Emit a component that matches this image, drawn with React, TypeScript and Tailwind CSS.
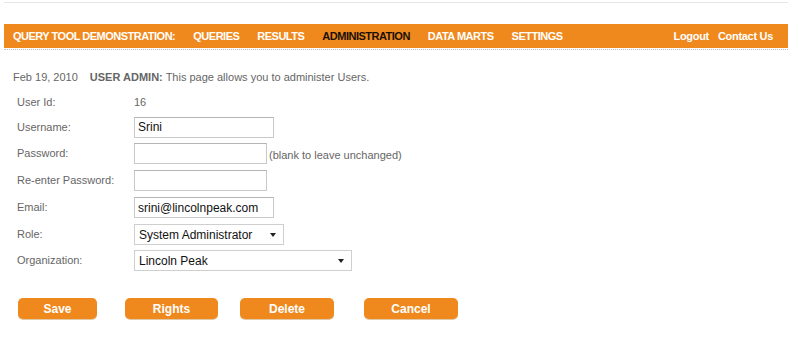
import React from "react";

const navItems = ["QUERIES", "RESULTS", "ADMINISTRATION", "DATA MARTS", "SETTINGS"];

const Field: React.FC<{ value?: string; width: string }> = ({ value, width }) => (
    <div
        className={`${width} h-[21px] border border-[#c9c9c9] border-t-[#b5b5b5] bg-white px-[3px] flex items-center text-[12px] text-[#111]`}
    >
        {value}
    </div>
);

const Select: React.FC<{ value: string; width: string }> = ({ value, width }) => (
    <div
        className={`${width} h-[21px] border border-[#cfcfcf] bg-white pl-[4px] pr-[7px] flex items-center justify-between text-[12px] text-[#111]`}
    >
        <span>{value}</span>
        <span className="w-0 h-0 border-l-[3.5px] border-r-[3.5px] border-t-[4px] border-l-transparent border-r-transparent border-t-[#222]" />
    </div>
);

const Row: React.FC<{ label: string; h: string; children: React.ReactNode }> = ({
    label,
    h,
    children,
}) => (
    <div className={`flex items-center ${h}`}>
        <div className="w-[117px] text-[#666]">{label}</div>
        <div className="flex items-center">{children}</div>
    </div>
);

const Button: React.FC<{ label: string; width: string }> = ({ label, width }) => (
    <button
        className={`${width} h-[21px] rounded-[5px] bg-[#f0891d] text-white font-bold text-[12px] leading-none shadow-[0_1px_0_#e0c9a8]`}
    >
        {label}
    </button>
);

export default function App() {
    return (
        <div className="w-[792px] h-[340px] bg-white font-['Liberation_Sans',Arial,sans-serif] text-[11px] overflow-hidden">
            <div className="mx-[4px] mt-[2px] h-px bg-[#e6e6e6]" />
            <div className="ml-[4px] mr-[4px] mt-[21px] h-[24px] bg-[#f0891d] flex items-center pl-[9px] pr-[15px] text-white font-bold text-[11px]">
                <div className="flex tracking-[-0.5px]">
                    <span className="mr-[18px]">QUERY TOOL DEMONSTRATION:</span>
                    <div className="flex gap-[18px]">
                        {navItems.map((item) => (
                            <span
                                key={item}
                                className={item === "ADMINISTRATION" ? "text-[#1a1008]" : ""}
                            >
                                {item}
                            </span>
                        ))}
                    </div>
                </div>
                <div className="ml-auto flex gap-[9px] tracking-[-0.3px]">
                    <span>Logout</span>
                    <span>Contact Us</span>
                </div>
            </div>
            <div className="mx-[4px] h-[2px] border-b border-dotted border-[#bdbdbd]" />

            <div className="pl-[13px] mt-[20px] leading-[14px] text-[#666]">
                Feb 19, 2010
                <span className="ml-[12px] font-bold">USER ADMIN:</span> This page allows you to
                administer Users.
            </div>

            <div className="pl-[17px] mt-[7px]">
                <Row label="User Id:" h="h-[23px]">
                    <span className="text-[#666]">16</span>
                </Row>
                <Row label="Username:" h="h-[26px]">
                    <Field value="Srini" width="w-[140px]" />
                </Row>
                <Row label="Password:" h="h-[27px]">
                    <Field width="w-[133px]" />
                    <span className="ml-[2px] mt-[4px] text-[11px] text-[#666]">
                        (blank to leave unchanged)
                    </span>
                </Row>
                <Row label="Re-enter Password:" h="h-[27px]">
                    <Field width="w-[133px]" />
                </Row>
                <Row label="Email:" h="h-[27px]">
                    <Field value="srini@lincolnpeak.com" width="w-[140px]" />
                </Row>
                <Row label="Role:" h="h-[27px]">
                    <Select value="System Administrator" width="w-[150px]" />
                </Row>
                <Row label="Organization:" h="h-[25px]">
                    <Select value="Lincoln Peak" width="w-[218px]" />
                </Row>
            </div>

            <div className="flex pl-[18px] mt-[25px]">
                <Button label="Save" width="w-[79px]" />
                <div className="ml-[28px]">
                    <Button label="Rights" width="w-[93px]" />
                </div>
                <div className="ml-[22px]">
                    <Button label="Delete" width="w-[94px]" />
                </div>
                <div className="ml-[30px]">
                    <Button label="Cancel" width="w-[94px]" />
                </div>
            </div>
        </div>
    );
}
